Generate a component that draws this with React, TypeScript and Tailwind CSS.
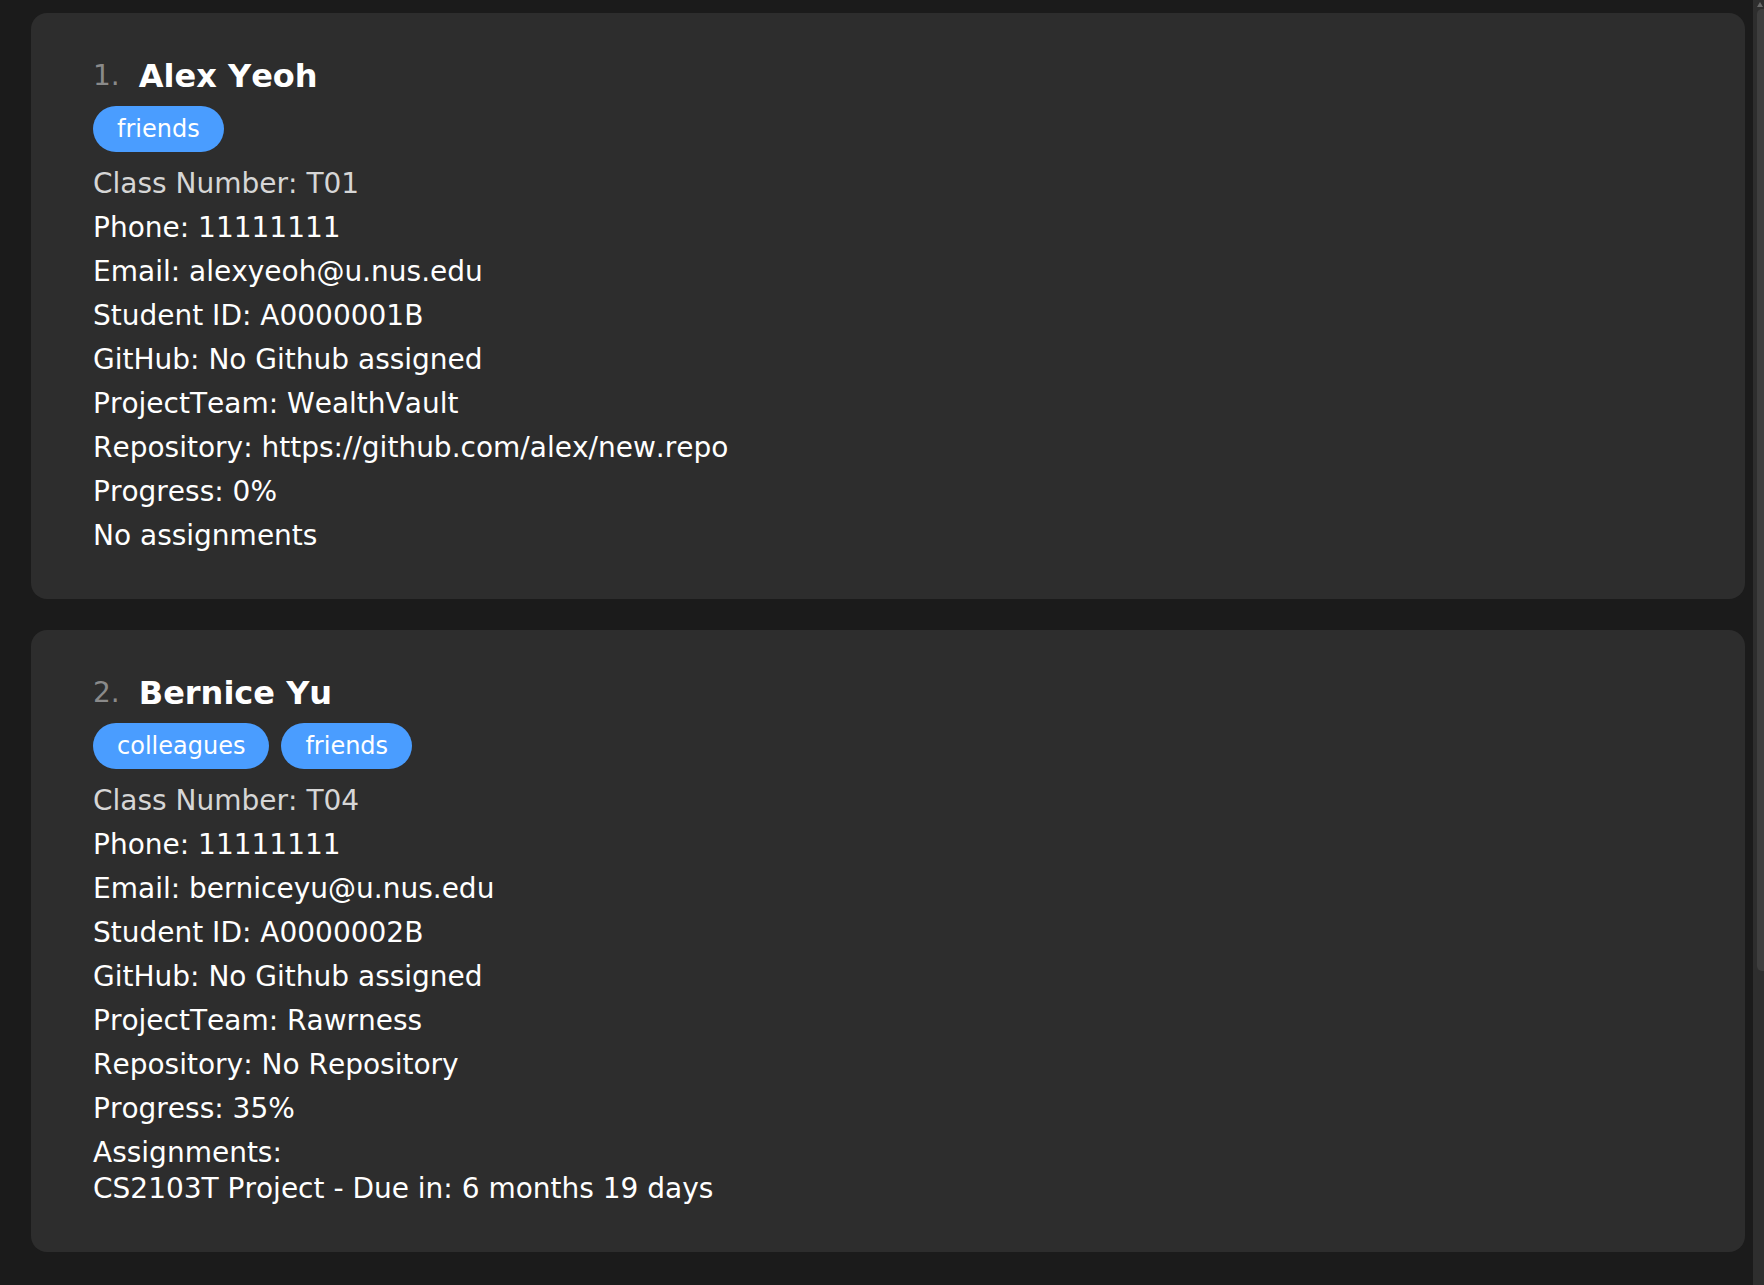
import React from "react";

type Person = {
  idx: number;
  name: string;
  tags: string[];
  classNo: string;
  phone: string;
  email: string;
  studentId: string;
  github: string;
  team: string;
  repo: string;
  progress: string;
  assignments: string[];
};

const people: Person[] = [
  {
    idx: 1,
    name: "Alex Yeoh",
    tags: ["friends"],
    classNo: "T01",
    phone: "11111111",
    email: "alexyeoh@u.nus.edu",
    studentId: "A0000001B",
    github: "No Github assigned",
    team: "WealthVault",
    repo: "https://github.com/alex/new.repo",
    progress: "0%",
    assignments: [],
  },
  {
    idx: 2,
    name: "Bernice Yu",
    tags: ["colleagues", "friends"],
    classNo: "T04",
    phone: "11111111",
    email: "berniceyu@u.nus.edu",
    studentId: "A0000002B",
    github: "No Github assigned",
    team: "Rawrness",
    repo: "No Repository",
    progress: "35%",
    assignments: ["CS2103T Project - Due in: 6 months 19 days"],
  },
];

function Line({ children, dim }: { children: React.ReactNode; dim?: boolean }) {
  return (
    <div
      className={
        "h-[44px] leading-[44px] whitespace-nowrap " +
        (dim ? "text-[#d6d6d6]" : "text-white")
      }
    >
      {children}
    </div>
  );
}

function Card({ p }: { p: Person }) {
  return (
    <div className="bg-[#2d2d2d] rounded-[16px] pt-[43px] pb-[45px] pl-[62px] pr-[20px]">
      <div className="flex items-center h-[40px] gap-[19px]">
        <span className="text-[28px] text-[#8a8a8a]">{p.idx}.</span>
        <span className="text-[32px] font-bold text-white">{p.name}</span>
      </div>
      <div className="flex gap-[12px] mt-[10px] mb-[10px]">
        {p.tags.map((t) => (
          <span
            key={t}
            className="h-[46px] leading-[46px] px-[24px] rounded-full bg-[#4a9dff] text-white text-[24px]"
          >
            {t}
          </span>
        ))}
      </div>
      <div className="text-[28px]">
        <Line dim>Class Number: {p.classNo}</Line>
        <Line>Phone: {p.phone}</Line>
        <Line>Email: {p.email}</Line>
        <Line>Student ID: {p.studentId}</Line>
        <Line>GitHub: {p.github}</Line>
        <Line>ProjectTeam: {p.team}</Line>
        <Line>Repository: {p.repo}</Line>
        <Line>Progress: {p.progress}</Line>
        <div className="mt-[4px] leading-[36px] text-white whitespace-nowrap">
          {p.assignments.length === 0 ? (
            <div>No assignments</div>
          ) : (
            <>
              <div>Assignments:</div>
              {p.assignments.map((a) => (
                <div key={a}>{a}</div>
              ))}
            </>
          )}
        </div>
      </div>
    </div>
  );
}

export default function App() {
  return (
    <div
      className="flex w-[1764px] h-[1285px] bg-[#1b1b1b] overflow-hidden [font-kerning:none]"
      style={{ fontFamily: '"DejaVu Sans", sans-serif' }}
    >
      <div className="flex-1 flex flex-col gap-[31px] pt-[13px] pl-[31px] pr-[8px]">
        {people.map((p) => (
          <Card key={p.idx} p={p} />
        ))}
      </div>
      <div className="w-[11px] bg-[#2e2e2e] flex flex-col items-end pt-[2px]">
        <div className="w-0 h-0 border-l-[3px] border-r-[3px] border-b-[5px] border-l-transparent border-r-transparent border-b-[#6a6a6a] mr-[1px]" />
        <div className="w-[7px] h-[962px] mt-[2px] bg-[#3e3e3e] rounded-tl-[5px] rounded-bl-[5px]" />
      </div>
    </div>
  );
}
